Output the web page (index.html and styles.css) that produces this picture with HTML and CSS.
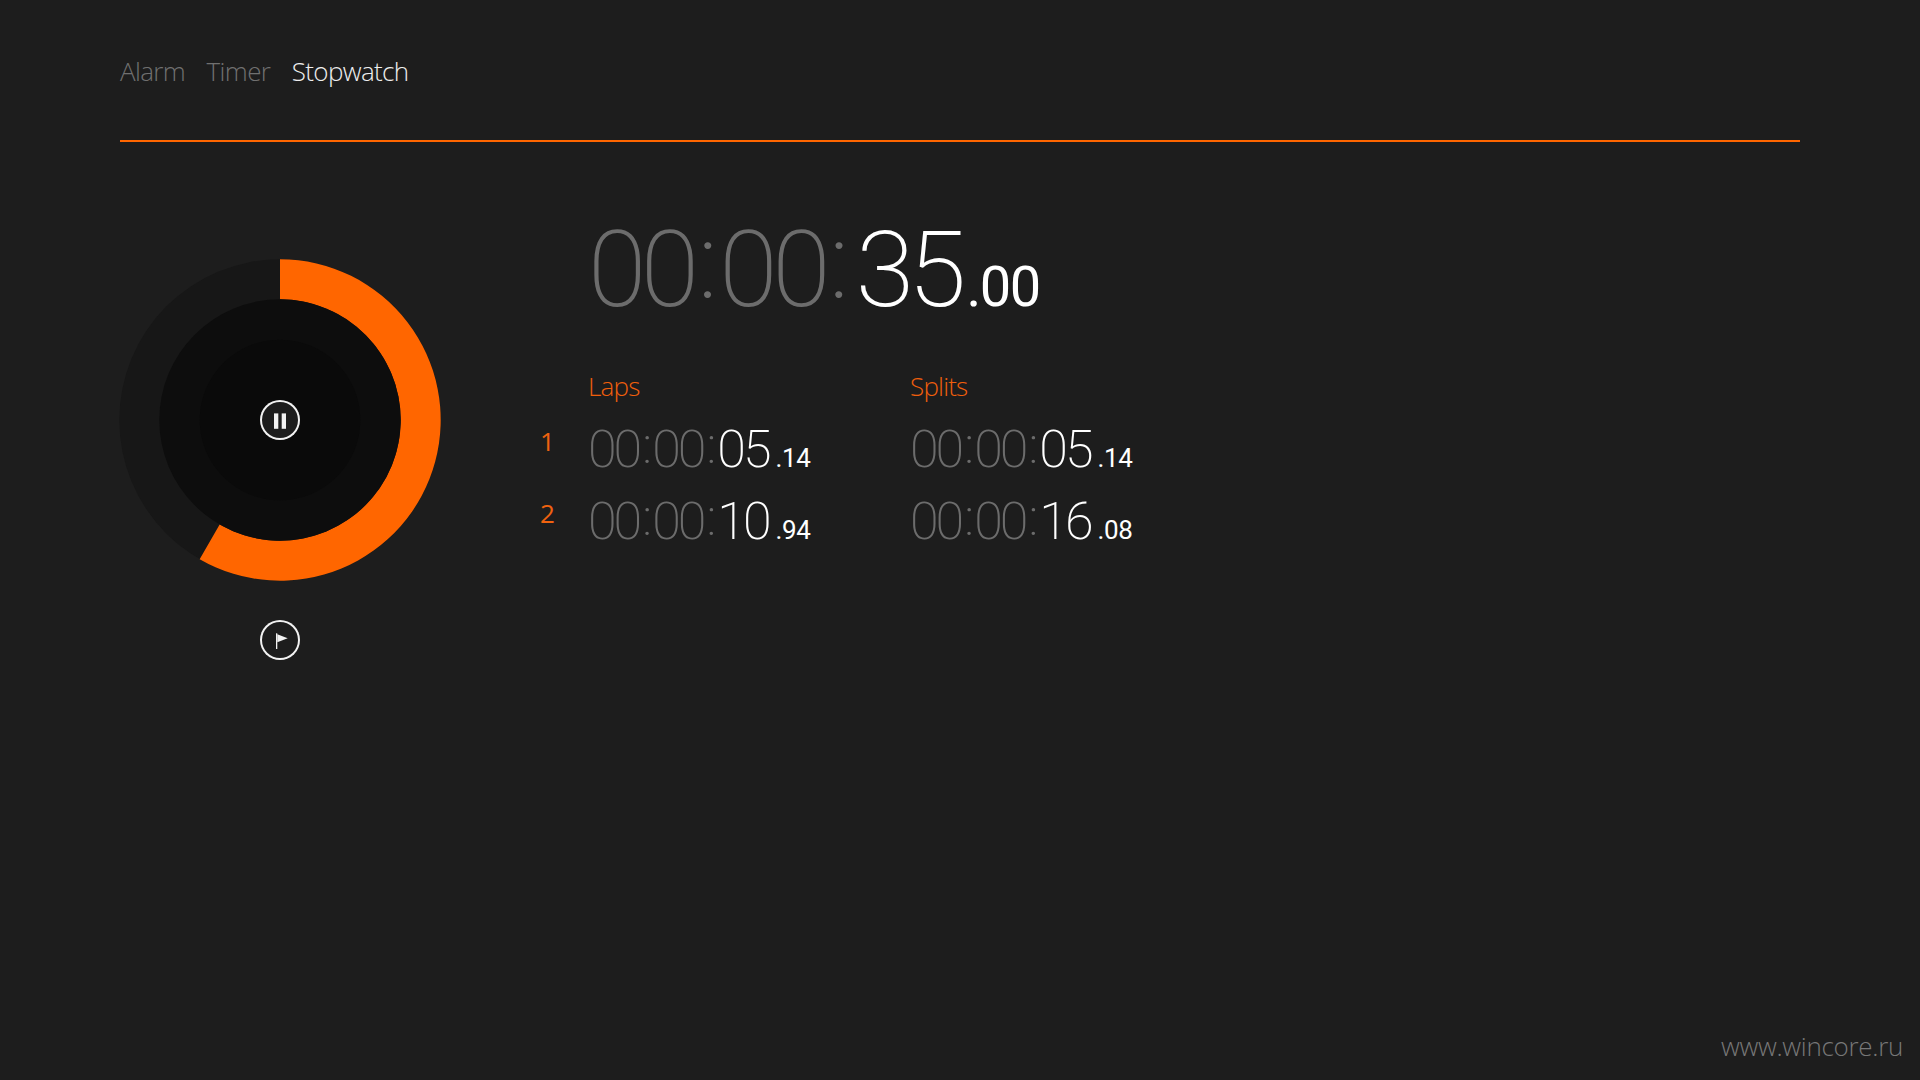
FILE: index.html
```html
<!DOCTYPE html>
<html lang="en">
<head>
<meta charset="utf-8">
<title>Stopwatch</title>
<link rel="stylesheet" href="styles.css">
</head>
<body>
<div class="page">
  <nav class="tabs">
    <span class="tab">Alarm</span>
    <span class="tab">Timer</span>
    <span class="tab active">Stopwatch</span>
  </nav>
  <main class="content">
    <section class="dial-col">
      <div class="dial">
        <svg class="ring" width="322" height="322" viewBox="0 0 322 322">
          <circle cx="161" cy="161" r="160.7" fill="#171717"/>
          <path d="M161 .3A160.7 160.7 0 1 1 80.65 300.17L100.65 265.5A120.7 120.7 0 1 0 161 40.3Z" fill="#ff6600"/>
          <circle cx="161" cy="161" r="120.7" fill="#0d0d0d"/>
          <circle cx="161" cy="161" r="80.3" fill="#0a0a0a"/>
        </svg>
        <button class="round-btn" aria-label="Pause">
          <svg width="40" height="40" viewBox="0 0 40 40"><rect x="14" y="13.4" width="4.3" height="15.4" fill="#f2f2f2"/><rect x="21.7" y="13.4" width="4.3" height="15.4" fill="#f2f2f2"/></svg>
        </button>
      </div>
      <button class="round-btn flag-btn" aria-label="Lap">
        <svg width="40" height="40" viewBox="0 0 40 40"><rect x="16" y="13.3" width="1.3" height="15.7" fill="#f2f2f2"/><path d="M17.3 14.3L27.7 18.3L17.3 22.3Z" fill="#f2f2f2"/></svg>
      </button>
    </section>
    <section class="times">
      <div class="main-time"><span class="dim">00<span class="colon">:</span>00<span class="colon">:</span></span><span class="hi">35</span><span class="frac">.00</span></div>
      <div class="table">
        <div class="head head-laps">Laps</div>
        <div class="head head-splits">Splits</div>
        <div class="num">1</div>
        <div class="row-time"><span class="dim">00<span class="colon">:</span>00<span class="colon">:</span></span><span class="hi">05</span><span class="frac">.14</span></div>
        <div class="row-time"><span class="dim">00<span class="colon">:</span>00<span class="colon">:</span></span><span class="hi">05</span><span class="frac">.14</span></div>
        <div class="num">2</div>
        <div class="row-time"><span class="dim">00<span class="colon">:</span>00<span class="colon">:</span></span><span class="hi">10</span><span class="frac">.94</span></div>
        <div class="row-time"><span class="dim">00<span class="colon">:</span>00<span class="colon">:</span></span><span class="hi">16</span><span class="frac">.08</span></div>
      </div>
    </section>
  </main>
  <div class="watermark">www.wincore.ru</div>
</div>
</body>
</html>
```
FILE: styles.css
```css
* { box-sizing: border-box; }
html, body { margin: 0; height: 100%; }
body {
  background: #1d1d1d;
  font-family: "Open Sans", "Liberation Sans", sans-serif;
  font-weight: 300;
  overflow: hidden;
}
.page {
  position: relative;
  width: 1920px;
  height: 1080px;
  padding: 0 120px;
}
.tabs {
  display: flex;
  gap: 21.5px;
  height: 142px;
  padding-top: 53px;
  border-bottom: 2px solid #ff6600;
  font-size: 26px;
  line-height: 36px;
  letter-spacing: -0.65px;
  color: #707070;
}
.tab.active { color: #eee; }
.content {
  display: flex;
  padding-top: 117px;
}
.dial-col {
  width: 420px;
  margin-left: -1px;
  display: flex;
  flex-direction: column;
  align-items: flex-start;
}
.dial {
  display: grid;
  width: 322px;
  height: 322px;
  place-items: center;
}
.ring, .dial .round-btn { grid-area: 1 / 1; }
.ring { display: block; }
.round-btn {
  display: block;
  width: 40px;
  height: 40px;
  padding: 0;
  border: 0;
  border-radius: 50%;
  background: #1d1d1d;
  box-shadow: inset 0 0 0 2px #f2f2f2;
}
.round-btn svg { display: block; }
.flag-btn { margin: 39px 0 0 141px; }
.times {
  display: flex;
  flex-direction: column;
  margin-top: -54px;
}
.main-time, .row-time {
  font-family: Roboto, "Open Sans", sans-serif;
  font-weight: 200;
  white-space: nowrap;
}
.main-time {
  margin-left: 49px;
  height: 128px;
  line-height: 130px;
  font-size: 106px;
  letter-spacing: -5.5px;
}
.dim { color: #6c6c6c; }
.hi { color: #fff; }
.main-time .colon { display: inline-block; vertical-align: 8px; line-height: 1; margin: 0 7px 0 4px; }
.main-time .hi { letter-spacing: -6px; margin-left: 5px; }
.main-time .frac { font-size: 56px; font-weight: 400; letter-spacing: -1.5px; margin-left: 6px; color: #fff; }
.table {
  display: grid;
  grid-template-columns: 49px 322px 300px;
  grid-template-rows: 43px 72px 72px;
  margin-top: 35px;
}
.head {
  font-size: 26px;
  line-height: 36px;
  letter-spacing: -0.8px;
  color: #f05f0c;
}
.head-laps { grid-column: 2; }
.head-splits { grid-column: 3; }
.num {
  padding: 12px 0 0 1px;
  font-size: 26px;
  color: #f0620f;
  line-height: 36px;
  font-weight: 400;
}
.row-time {
  padding-top: 3px;
  font-size: 52px;
  line-height: 72px;
  letter-spacing: -3px;
}
.row-time .colon { display: inline-block; vertical-align: 4px; line-height: 1; margin: 0 3px; }
.row-time .hi { margin-left: 1px; }
.row-time .frac { font-size: 26px; font-weight: 400; letter-spacing: -0.4px; margin-left: 7px; color: #fff; }
.watermark {
  position: absolute;
  right: 17px;
  bottom: 16px;
  font-size: 26px;
  line-height: 36px;
  letter-spacing: -0.3px;
  color: #777;
}
```
